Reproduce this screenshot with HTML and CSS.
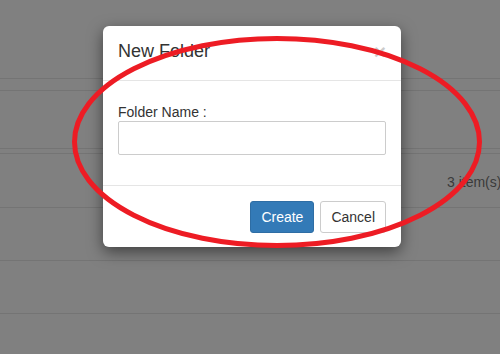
FILE: index.html
```html
<!DOCTYPE html>
<html>
<head>
<meta charset="utf-8">
<link rel="stylesheet" href="styles.css">
</head>
<body>
<div class="page">
  <div class="row r1"></div>
  <div class="row r2"></div>
  <div class="row r3"></div>
  <div class="row r4"></div>
  <div class="row r5"><span></span><span class="count">3 item(s)</span></div>
  <div class="row r6"></div>
  <div class="row r7"></div>
  <div class="row r8"></div>
</div>

<div class="modal">
  <div class="modal-header">
    <span class="close">&times;</span>
    <h4 class="modal-title">New Folder</h4>
  </div>
  <div class="modal-body">
    <label class="field-label">Folder Name :</label>
    <input class="field-input" type="text">
  </div>
  <div class="modal-footer">
    <button class="btn btn-primary">Create</button>
    <button class="btn btn-default">Cancel</button>
  </div>
</div>

<svg class="annotation" width="500" height="354" viewBox="0 0 500 354">
  <ellipse cx="277" cy="142" rx="202.5" ry="103.5" fill="none" stroke="#ed1c24" stroke-width="5"/>
</svg>
</body>
</html>
```

FILE: styles.css
```css
html, body {
  margin: 0;
  padding: 0;
  width: 500px;
  height: 354px;
  overflow: hidden;
  background: #808080;
  font-family: "Liberation Sans", Arial, sans-serif;
  font-size: 14px;
  color: #333;
}

.page {
  display: flex;
  flex-direction: column;
}

.row {
  border-bottom: 1px solid #747474;
  display: grid;
  grid-template-columns: 447px 1fr;
  align-items: center;
  white-space: nowrap;
  overflow: hidden;
}
.r1 { height: 78px; }
.r2 { height: 11px; }
.r3 { height: 57px; }
.r4 { height: 4px; }
.r5 { height: 53px; }
.r6 { height: 52px; }
.r7 { height: 52px; }
.r8 { height: 40px; border-bottom: none; }

.count {
  color: #3a3a3a;
  font-size: 14px;
  line-height: 20px;
  padding-top: 3px;
}

.modal {
  position: absolute;
  left: 103px;
  top: 26px;
  width: 298px;
  background: #fff;
  border-radius: 6px;
  box-shadow: 0 5px 15px rgba(0, 0, 0, 0.5);
}

.modal-header {
  padding: 12px 15px 16px;
  border-bottom: 1px solid #e5e5e5;
}

.modal-title {
  margin: 0;
  font-size: 18px;
  font-weight: normal;
  line-height: 26px;
  color: #333;
}

.close {
  float: right;
  font-size: 21px;
  font-weight: bold;
  line-height: 1;
  color: #000;
  opacity: 0.2;
  margin-top: 3px;
}

.modal-body {
  padding: 22px 15px 30px;
}

.field-label {
  display: block;
  line-height: 18px;
  font-size: 14px;
  color: #333;
}

.field-input {
  display: block;
  box-sizing: border-box;
  width: 100%;
  height: 34px;
  margin: 0;
  border: 1px solid #ccc;
  border-radius: 2px;
  padding: 6px 12px;
  font-family: inherit;
  font-size: 14px;
}

.modal-footer {
  border-top: 1px solid #e5e5e5;
  padding: 15px 15px 14px;
  display: flex;
  justify-content: flex-end;
  gap: 6px;
}

.btn {
  height: 32px;
  padding: 0 10px;
  font-family: "Liberation Sans", Arial, sans-serif;
  font-size: 14px;
  border-radius: 3px;
  border: 1px solid transparent;
  cursor: pointer;
}

.btn-primary {
  background: #337ab7;
  border-color: #2e6da4;
  color: #fff;
}

.btn-default {
  background: #fff;
  border-color: #ccc;
  color: #333;
}

.annotation {
  position: absolute;
  left: 0;
  top: 0;
  pointer-events: none;
}
```
